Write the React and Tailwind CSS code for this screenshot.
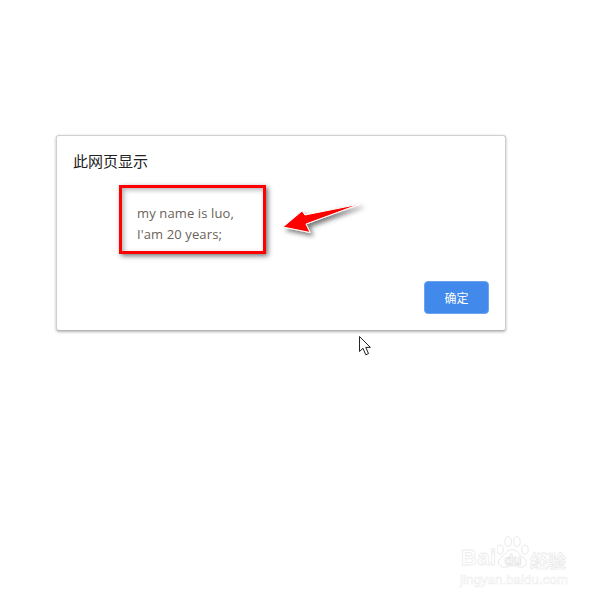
export default function App() {
  return (
    <div className="relative w-[600px] h-[600px] bg-white overflow-hidden pt-[135px] pl-[56px] font-['Open_Sans','Noto_Sans_CJK_SC',sans-serif]">
      <div className="w-[450px] h-[196px] bg-white rounded-[3px] border border-[#cfcfcf] border-b-[#b5b5b5] shadow-[0_1px_3px_rgba(0,0,0,0.3)] flex flex-col pt-[15px] px-[16px]">
        <div className="text-[15px] leading-[20px] text-[#222222] font-['Noto_Sans_CJK_SC',sans-serif]">此网页显示</div>
        <div className="ml-[46px] mt-[14px] w-[147px] h-[69px] border-[3px] border-[#ff0000] shadow-[2px_2px_5px_rgba(0,0,0,0.55),inset_2px_2px_5px_rgba(0,0,0,0.3)] pl-[15px] pt-[15px] text-[13px] tracking-[0.12px] leading-[21px] text-[#6b5f5a]">
          <div>my name is luo,</div>
          <div>I'am 20 years;</div>
        </div>
        <div className="mt-auto mb-[16px] flex justify-end">
          <div className="w-[65px] h-[33px] rounded-[4px] bg-[#4189ea] border border-[#6ba3ee] flex items-center justify-center text-white text-[12px] font-['Noto_Sans_CJK_SC',sans-serif]">确定</div>
        </div>
      </div>

      <svg className="absolute left-[275px] top-[195px]" width="100" height="48" viewBox="0 0 100 48">
        <defs>
          <filter id="s" x="-20%" y="-40%" width="150%" height="200%">
            <feDropShadow dx="3" dy="3" stdDeviation="2.5" floodColor="#000" floodOpacity="0.55" />
          </filter>
        </defs>
        <path d="M8 32 L27 16 L30 20 L85 9 L31 29 L35 37.5 Z" fill="#ff0000" stroke="#fff" strokeWidth="1" strokeLinejoin="round" filter="url(#s)" />
      </svg>

      <svg className="absolute left-[358px] top-[335px]" width="16" height="22" viewBox="0 0 16 22">
        <path d="M1.5 1.5 L1.5 16.5 L5 13.3 L7.8 19.8 L10.5 18.6 L7.8 12.4 L12.4 12.4 Z" fill="#fff" stroke="#222" strokeWidth="1" strokeLinejoin="round" />
      </svg>

      <div className="absolute left-[460px] top-[534px] w-[110px] flex flex-col font-['Liberation_Sans',sans-serif] text-white">
        <div className="flex items-end h-[36px]">
          <div className="w-[37px] text-[22px] leading-[22px] font-bold mb-[1px] pl-[1px] tracking-[0.5px] [-webkit-text-stroke:0.8px_#ececec]">Bai</div>
          <div className="relative w-[32px] h-[36px] flex items-end justify-center">
            <svg className="absolute inset-0" width="32" height="36" viewBox="8 0 40 40" fill="#fff" stroke="#e6e6e6" strokeWidth="1.2">
              <ellipse cx="12" cy="17" rx="4" ry="5.5" />
              <ellipse cx="22" cy="7" rx="4" ry="6" />
              <ellipse cx="33" cy="7" rx="4" ry="6" />
              <ellipse cx="43" cy="17" rx="4" ry="5.5" />
              <path d="M27 17 C20 17 18 24 13 27 C7 31 10 39 17 39 C22 39 24 37 27 37 C31 37 33 39 38 39 C45 39 47 31 41 27 C36 24 34 17 27 17 Z" />
            </svg>
            <div className="relative mb-[2px] text-[14px] leading-[16px] font-bold [-webkit-text-stroke:0.7px_#dedede]">du</div>
          </div>
          <div className="ml-[1px] text-[18px] leading-[20px] font-bold whitespace-nowrap [-webkit-text-stroke:0.7px_#e8e8e8] font-['Noto_Sans_CJK_SC',sans-serif]">经验</div>
        </div>
        <div className="mt-[2px] text-[13.4px] leading-[16px] whitespace-nowrap [-webkit-text-stroke:0.5px_#ececec]">jingyan.baidu.com</div>
      </div>
    </div>
  );
}
